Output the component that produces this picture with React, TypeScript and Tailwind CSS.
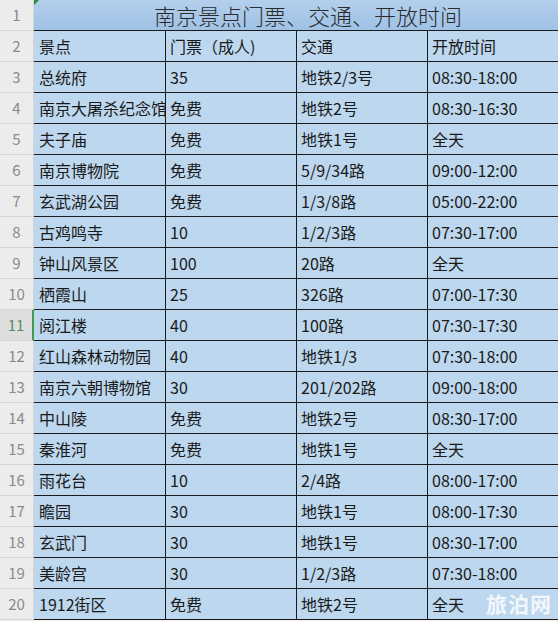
import React from "react";

const rows: [string, string, string, string][] = [
  ["景点", "门票（成人)", "交通", "开放时间"],
  ["总统府", "35", "地铁2/3号", "08:30-18:00"],
  ["南京大屠杀纪念馆", "免费", "地铁2号", "08:30-16:30"],
  ["夫子庙", "免费", "地铁1号", "全天"],
  ["南京博物院", "免费", "5/9/34路", "09:00-12:00"],
  ["玄武湖公园", "免费", "1/3/8路", "05:00-22:00"],
  ["古鸡鸣寺", "10", "1/2/3路", "07:30-17:00"],
  ["钟山风景区", "100", "20路", "全天"],
  ["栖霞山", "25", "326路", "07:00-17:30"],
  ["阅江楼", "40", "100路", "07:30-17:30"],
  ["红山森林动物园", "40", "地铁1/3", "07:30-18:00"],
  ["南京六朝博物馆", "30", "201/202路", "09:00-18:00"],
  ["中山陵", "免费", "地铁2号", "08:30-17:00"],
  ["秦淮河", "免费", "地铁1号", "全天"],
  ["雨花台", "10", "2/4路", "08:00-17:00"],
  ["瞻园", "30", "地铁1号", "08:00-17:30"],
  ["玄武门", "30", "地铁1号", "08:30-17:00"],
  ["美龄宫", "30", "1/2/3路", "07:30-18:00"],
  ["1912街区", "免费", "地铁2号", "全天"],
];

const font = { fontFamily: '"Noto Sans CJK SC", "Noto Sans", sans-serif' };

export default function App() {
  return (
    <div
      className="relative w-[558px] h-[621px] overflow-hidden bg-[#efefef] text-[#1a1a1a]"
      style={font}
    >
      {/* Title row */}
      <div className="flex h-[31px]">
        <div className="w-[34px] shrink-0 flex items-center justify-center border-b border-r border-[#d4d4d4] bg-[#ececec] text-[15px] text-[#8a8a8a]">
          1
        </div>
        <div className="relative flex-1 flex items-center justify-center pl-[24px] border-b border-[#1a1a1a] bg-gradient-to-b from-[#b3cfec] to-[#9fc2e6] text-[22px] font-light text-[#2a2a2a] leading-none">
          南京景点门票、交通、开放时间
          <div className="absolute left-0 top-0 w-0 h-0 border-t-[5px] border-r-[5px] border-t-[#2e8b3e] border-r-transparent" />
        </div>
      </div>
      {rows.map((r, i) => {
        const n = i + 2;
        const sel = n === 11;
        return (
          <div key={n} className="flex h-[31px]">
            <div
              className={
                sel
                  ? "w-[34px] shrink-0 flex items-center justify-center border-b border-r-2 border-b-[#d4d4d4] border-r-[#3f9a4e] bg-[#dedede] text-[15px] text-[#5d8a64]"
                  : "w-[34px] shrink-0 flex items-center justify-center border-b border-r border-[#d4d4d4] bg-[#ececec] text-[15px] text-[#8a8a8a]"
              }
            >
              {n}
            </div>
            <div className="w-[132px] shrink-0 flex items-center pl-[5px] border-b border-r border-[#1a1a1a] bg-[#bdd7ee] text-[16px] whitespace-nowrap overflow-hidden">
              {r[0]}
            </div>
            <div className="w-[131px] shrink-0 flex items-center pl-[4px] border-b border-r border-[#1a1a1a] bg-[#bdd7ee] text-[16px] whitespace-nowrap overflow-hidden">
              {r[1]}
            </div>
            <div className="w-[131px] shrink-0 flex items-center pl-[4px] border-b border-r border-[#1a1a1a] bg-[#bdd7ee] text-[16px] whitespace-nowrap overflow-hidden">
              {r[2]}
            </div>
            <div className="w-[130px] shrink-0 flex items-center pl-[4px] border-b border-[#1a1a1a] bg-[#bdd7ee] text-[16px] whitespace-nowrap overflow-hidden">
              {r[3]}
            </div>
          </div>
        );
      })}
      <div className="absolute left-[486px] top-[590px] text-[21px] font-bold text-white/80 tracking-[1px] leading-none pt-[3px]">
        旅泊网
      </div>
    </div>
  );
}
